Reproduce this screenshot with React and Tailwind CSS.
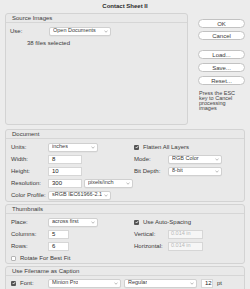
import React from 'react';

const Chevron = () => (
    <svg width="4" height="3" viewBox="0 0 4 3" className="shrink-0">
        <path d="M0.5 0.8 L2 2.2 L3.5 0.8" fill="none" stroke="#9a9a9a" strokeWidth="0.7" />
    </svg>
);

const Select = ({ value, w }) => (
    <div className={`${w} h-[9px] flex items-center justify-between gap-[1px] pl-[3px] pr-[2px] bg-white border border-[#d0d0d0] rounded-[2px] shadow-[0_0.5px_0_rgba(0,0,0,0.06)]`}>
        <span className="whitespace-nowrap overflow-hidden leading-none text-[5.5px]">{value}</span>
        <Chevron />
    </div>
);

const Field = ({ value, w, disabled }) => (
    <div className={`${w} h-[9px] flex items-center border border-[#d6d6d6] leading-none whitespace-nowrap ${disabled ? 'px-[2px] bg-[#f6f6f6] text-[#b8b8b8] text-[5.5px]' : 'px-[3px] bg-white text-[#222]'}`}>
        {value}
    </div>
);

const Check = ({ on }) => (
    on ? (
        <div className="w-[5px] h-[5px] rounded-[1px] bg-[#555] flex items-center justify-center shrink-0">
            <svg width="4" height="4" viewBox="0 0 4 4">
                <path d="M0.7 2 L1.6 3 L3.3 0.9" fill="none" stroke="#fff" strokeWidth="0.8" />
            </svg>
        </div>
    ) : (
        <div className="w-[5px] h-[5px] rounded-[1px] bg-white border border-[#b5b5b5] shrink-0" />
    )
);

const Row = ({ label, lw = 'w-[37px]', children }) => (
    <div className="h-[12px] flex items-center">
        <span className={`${lw} shrink-0 leading-none whitespace-nowrap`}>{label}</span>
        {children}
    </div>
);

const CheckRow = ({ on, label, children }) => (
    <div className="h-[12px] flex items-center gap-[4px]">
        <Check on={on} />
        <span className="leading-none">{label}</span>
        {children}
    </div>
);

const Panel = ({ title, className = '', children }) => (
    <div className={`bg-[#e9e9e9] border border-[#d3d3d3] rounded-[3px] ${className}`}>
        <div className="h-[9px] flex items-center pl-[6px] border-b border-[#d6d6d6] leading-none">{title}</div>
        {children}
    </div>
);

const Btn = ({ children, className = '' }) => (
    <div className={`h-[9px] w-[47px] flex items-center justify-center bg-white border border-[#c2c2c2] rounded-full leading-none ${className}`}>
        {children}
    </div>
);

export default function App() {
    return (
        <div
            className="w-[250px] h-[289px] overflow-hidden bg-[#ececec] text-[6px] text-[#3a3a3a]"
            style={{ fontFamily: '"Liberation Sans", Arial, sans-serif' }}
        >
            <div className="h-[13px] flex items-center justify-center font-bold text-[#2a2a2a]">Contact Sheet II</div>

            <div className="flex px-[5px]">
                <Panel title="Source Images" className="w-[183px] h-[112px]">
                    <div className="pt-[2px] pl-[4px]">
                        <Row label="Use:" lw="w-[39px]">
                            <Select value="Open Documents" w="w-[62px]" />
                        </Row>
                        <div className="h-[12px] flex items-center pl-[17px] leading-none">38 files selected</div>
                    </div>
                </Panel>

                <div className="ml-[10px] flex flex-col">
                    <Btn className="mt-[6px] border-[#a9a9a9]">OK</Btn>
                    <Btn className="mt-[3px]">Cancel</Btn>
                    <Btn className="mt-[10px]">Load...</Btn>
                    <Btn className="mt-[4px]">Save...</Btn>
                    <Btn className="mt-[4px]">Reset...</Btn>
                    <div className="mt-[6px] text-[5.5px] leading-[5px] pl-[1px] text-[#444]">
                        Press the ESC<br />key to Cancel<br />processing<br />images
                    </div>
                </div>
            </div>

            <div className="px-[5px] mt-[4px] flex flex-col gap-[2px]">
                <Panel title="Document" className="h-[73px]">
                    <div className="flex pt-[2px] pl-[5px]">
                        <div className="w-[123px] shrink-0">
                            <Row label="Units:">
                                <Select value="inches" w="w-[50px]" />
                            </Row>
                            <Row label="Width:">
                                <Field value="8" w="w-[34px]" />
                            </Row>
                            <Row label="Height:">
                                <Field value="10" w="w-[34px]" />
                            </Row>
                            <Row label="Resolution:">
                                <Field value="300" w="w-[34px]" />
                                <div className="ml-[2px]">
                                    <Select value="pixels/inch" w="w-[49px]" />
                                </div>
                            </Row>
                            <Row label="Color Profile:">
                                <Select value="sRGB IEC61966-2.1" w="w-[63px]" />
                            </Row>
                        </div>
                        <div className="flex-1">
                            <CheckRow on label="Flatten All Layers" />
                            <Row label="Mode:" lw="w-[34px]">
                                <Select value="RGB Color" w="w-[54px]" />
                            </Row>
                            <Row label="Bit Depth:" lw="w-[34px]">
                                <Select value="8-bit" w="w-[54px]" />
                            </Row>
                        </div>
                    </div>
                </Panel>

                <Panel title="Thumbnails" className="h-[60px]">
                    <div className="flex pt-[2px] pl-[5px]">
                        <div className="w-[123px] shrink-0">
                            <Row label="Place:">
                                <Select value="across first" w="w-[50px]" />
                            </Row>
                            <Row label="Columns:">
                                <Field value="5" w="w-[21px]" />
                            </Row>
                            <Row label="Rows:">
                                <Field value="6" w="w-[21px]" />
                            </Row>
                            <CheckRow label="Rotate For Best Fit" />
                        </div>
                        <div className="flex-1">
                            <CheckRow on label="Use Auto-Spacing" />
                            <Row label="Vertical:" lw="w-[34px]">
                                <Field value="0.014 in" w="w-[35px]" disabled />
                            </Row>
                            <Row label="Horizontal:" lw="w-[34px]">
                                <Field value="0.014 in" w="w-[35px]" disabled />
                            </Row>
                        </div>
                    </div>
                </Panel>

                <Panel title="Use Filename as Caption" className="h-[30px]">
                    <div className="pt-[1px] pl-[5px]">
                        <div className="h-[12px] flex items-center">
                            <Check on />
                            <span className="ml-[4px] w-[28px] leading-none">Font:</span>
                            <Select value="Minion Pro" w="w-[73px]" />
                            <div className="ml-[3px]">
                                <Select value="Regular" w="w-[73px]" />
                            </div>
                            <div className="ml-[4px]">
                                <Field value="12" w="w-[12px]" />
                            </div>
                            <span className="ml-[4px] leading-none">pt</span>
                        </div>
                    </div>
                </Panel>
            </div>
        </div>
    );
}
